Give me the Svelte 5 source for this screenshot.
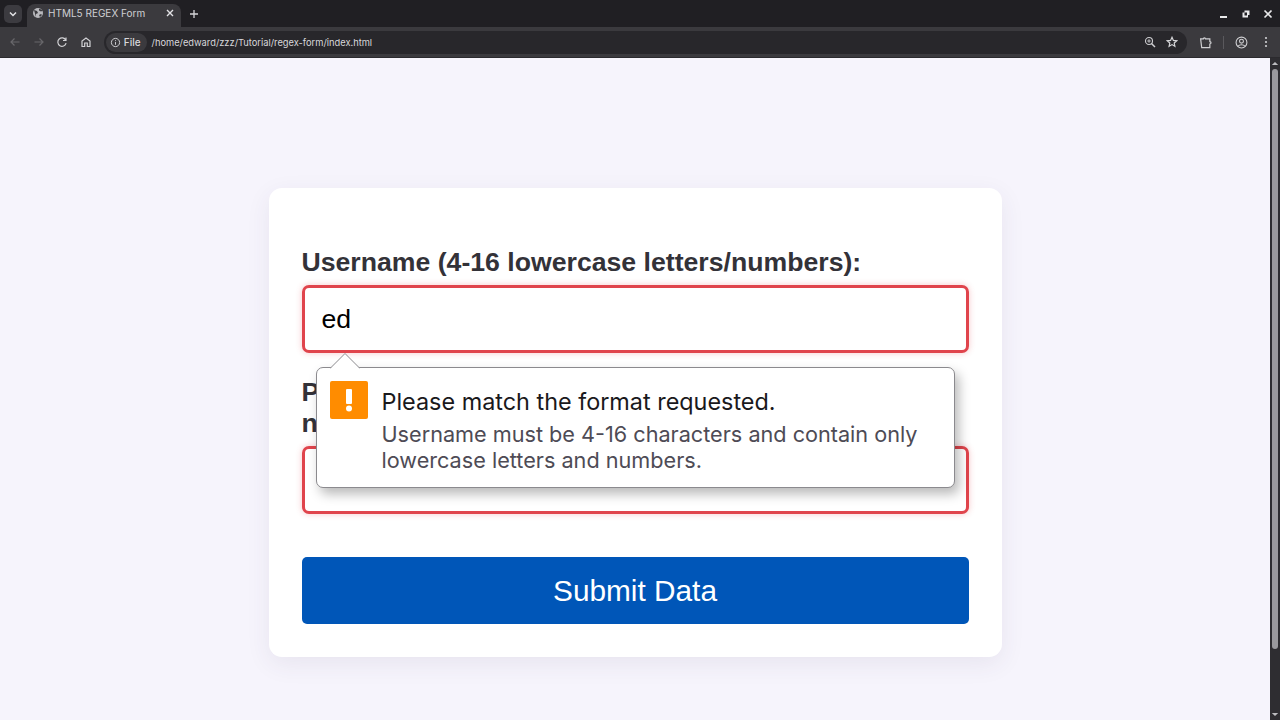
<script>
  let username = $state('ed');
  let password = $state('');
</script>

<div class="window">
  <div class="tabstrip">
    <button class="tabsearch" aria-label="Search tabs">
      <svg viewBox="0 0 10 10" width="10" height="10"><path d="M2 3.5l3 3 3-3" fill="none" stroke="#e3e3e6" stroke-width="1.5" /></svg>
    </button>
    <div class="tab">
      <svg class="favicon" viewBox="0 0 12 12" width="12" height="12">
        <circle cx="6" cy="6" r="5" fill="#b9b9bd" />
        <path d="M2 3l3 1 1 2-2 1 0 3M7 1.5l0 2 2 1 2-1M7 8l2-1 1 1-2 2z" fill="#3b3a3e" />
      </svg>
      <span class="tabtitle">HTML5 REGEX Form</span>
      <svg class="tabclose" viewBox="0 0 10 10" width="10" height="10"><path d="M2 2l6 6M8 2l-6 6" stroke="#e3e3e6" stroke-width="1.4" /></svg>
    </div>
    <svg class="newtab" viewBox="0 0 10 10" width="10" height="10"><path d="M5 1v8M1 5h8" stroke="#d5d5d8" stroke-width="1.3" /></svg>
    <div class="winctl">
      <svg viewBox="0 0 10 10" width="10" height="10"><path d="M1 8h7" stroke="#e8e8ea" stroke-width="2" /></svg>
      <svg viewBox="0 0 10 10" width="10" height="10"><path d="M3.5 1.5h5v4.500h-1.500v2.500h-5.500v-5h2z" fill="#e8e8ea" /><path d="M3.500 3.500h2.500v3h-2.500z" fill="#201f23" /></svg>
      <svg viewBox="0 0 10 10" width="10" height="10"><path d="M1.500 1.500l7 7M8.500 1.500l-7 7" stroke="#e8e8ea" stroke-width="1.700" /></svg>
    </div>
  </div>

  <div class="toolbar">
    <svg class="navicon" viewBox="0 0 12 12" width="12" height="12"><path d="M10.500 6h-8.500M5.500 2.500l-3.500 3.500 3.500 3.500" fill="none" stroke="#68676b" stroke-width="1.200" /></svg>
    <svg class="navicon" viewBox="0 0 12 12" width="12" height="12"><path d="M1.500 6h8.500M6.500 2.500l3.500 3.500-3.500 3.500" fill="none" stroke="#68676b" stroke-width="1.200" /></svg>
    <svg class="navicon" viewBox="0 0 12 12" width="12" height="12"><path d="M9.800 4.200a4.200 4.200 0 1 0 .3 3M10 1.500v3h-3" fill="none" stroke="#d2d2d5" stroke-width="1.200" /></svg>
    <svg class="navicon" viewBox="0 0 12 12" width="12" height="12"><path d="M2 10.500v-5.500l4-3 4 3v5.500h-2.700v-3.500h-2.600v3.500z" fill="none" stroke="#d2d2d5" stroke-width="1.200" /></svg>
    <div class="omnibox">
      <div class="chip">
        <svg viewBox="0 0 12 12" width="11" height="11"><circle cx="6" cy="6" r="4.500" fill="none" stroke="#d8d8db" stroke-width="1" /><path d="M6 5.500v3M6 3.500v1" stroke="#d8d8db" stroke-width="1" /></svg>
        <span>File</span>
      </div>
      <span class="url">/home/edward/zzz/Tutorial/regex-form/index.html</span>
      <svg class="zoomicon" viewBox="0 0 12 12" width="12" height="12"><circle cx="5" cy="5" r="3.500" fill="none" stroke="#cfcfd2" stroke-width="1.100" /><path d="M7.500 7.500l3.500 3.500" stroke="#cfcfd2" stroke-width="1.500" /><path d="M3.200 5h3.600M5 3.200v3.600" stroke="#cfcfd2" stroke-width=".9" /></svg>
      <svg class="star" viewBox="0 0 12 12" width="12" height="12"><path d="M6 1.300l1.400 3.100 3.300.4-2.500 2.200.7 3.300-2.900-1.700-2.900 1.700.7-3.300-2.500-2.200 3.300-.4z" fill="none" stroke="#d5d5d8" stroke-width="1.200" /></svg>
    </div>
    <svg class="ext" viewBox="0 0 12 12" width="13" height="13"><path d="M1.500 2.500h2.500a1 1 0 0 1 2 0h4v2.500a1 1 0 0 1 0 2.200v3.300h-7.500z" transform="translate(0 .2)" fill="none" stroke="#d0d0d3" stroke-width="1.100" /></svg>
    <span class="sep"></span>
    <svg class="avatar" viewBox="0 0 12 12" width="13" height="13"><circle cx="6" cy="6" r="5" fill="none" stroke="#d0d0d3" stroke-width="1" /><circle cx="6" cy="4.800" r="1.800" fill="none" stroke="#d0d0d3" stroke-width="1" /><path d="M2.800 9.300c1.500-1.700 4.900-1.700 6.400 0" fill="none" stroke="#d0d0d3" stroke-width="1" /></svg>
    <svg class="dots" viewBox="0 0 12 12" width="12" height="12"><circle cx="6" cy="2" r="1.100" fill="#d0d0d3" /><circle cx="6" cy="6" r="1.100" fill="#d0d0d3" /><circle cx="6" cy="10" r="1.100" fill="#d0d0d3" /></svg>
  </div>

  <div class="viewport">
    <main class="page">
      <form class="card" onsubmit={(e) => e.preventDefault()}>
        <div class="field">
          <label for="username">Username (4-16 lowercase letters/numbers):</label>
          <div class="inputwrap">
            <input id="username" type="text" bind:value={username} />
            <div class="bubble" role="alert">
              <svg class="arrow" viewBox="0 0 30 16" width="30" height="16"><path d="M0 15.500L15 .5 30 15.500" fill="#fff" stroke="#8b8a8e" stroke-width="1" /></svg>
              <div class="warn">
                <svg viewBox="0 0 38 38" width="38" height="38"><rect width="38" height="38" rx="2" fill="#ff8c00" /><rect x="16" y="8" width="6" height="15" rx="1" fill="#fff" /><circle cx="19" cy="27.500" r="3" fill="#fff" /></svg>
              </div>
              <div class="msg">
                <div class="msgtitle">Please match the format requested.</div>
                <div class="msgbody">Username must be 4-16 characters and contain only lowercase letters and numbers.</div>
              </div>
            </div>
          </div>
        </div>
        <div class="field pw">
          <label for="password">Password (8 chars, 1 uppercase, 1 lowercase, 1 number):</label>
          <input id="password" type="password" bind:value={password} />
        </div>
        <button class="submit" type="submit">Submit Data</button>
      </form>
    </main>
    <div class="scrollbar">
      <svg viewBox="0 0 10 6" width="8" height="5"><path d="M1 5l4-4 4 4z" fill="#bdbdc0" /></svg>
      <span class="thumb"></span>
      <svg class="down" viewBox="0 0 10 6" width="8" height="5"><path d="M1 1l4 4 4-4z" fill="#bdbdc0" /></svg>
    </div>
  </div>
</div>

<style>
  :global(body) {
    margin: 0;
    overflow: hidden;
  }

  .window {
    width: 1280px;
    height: 720px;
    display: flex;
    flex-direction: column;
    font-family: "Liberation Sans", Arial, sans-serif;
  }

  /* browser chrome */
  .tabstrip {
    height: 27px;
    background: #201f23;
    display: flex;
    align-items: center;
    flex-shrink: 0;
  }

  .tabsearch {
    width: 18px;
    height: 18px;
    margin-left: 4px;
    padding: 0;
    border: none;
    border-radius: 5px;
    background: #3c3b40;
    display: flex;
    align-items: center;
    justify-content: center;
  }

  .tab {
    width: 154px;
    height: 23px;
    margin-top: 4px;
    margin-left: 5px;
    background: #3b3a3e;
    border-radius: 8px 8px 0 0;
    display: flex;
    align-items: center;
    box-sizing: border-box;
    padding: 0 6px 5px 5px;
    color: #d0d0d3;
    font-family: Inter, sans-serif;
    font-size: 10px;
  }

  .tabtitle {
    margin-left: 4px;
    flex: 1;
  }

  .newtab {
    margin-left: 8px;
  }

  .winctl {
    margin-left: auto;
    margin-right: 7px;
    display: flex;
    gap: 12px;
  }

  .toolbar {
    height: 30px;
    background: #3b3a3e;
    border-bottom: 1px solid #2b2a2e;
    display: flex;
    align-items: center;
    flex-shrink: 0;
    padding-left: 9px;
  }

  .navicon {
    margin-right: 11.700px;
  }

  .omnibox {
    width: 1083px;
    height: 23px;
    background: #28272b;
    border-radius: 12px;
    display: flex;
    align-items: center;
    box-sizing: border-box;
    padding-right: 9px;
    color: #d8d8db;
    font-family: Inter, sans-serif;
  }

  .chip {
    height: 19px;
    margin-left: 2px;
    padding: 0 6px 0 4px;
    background: #3b3a3e;
    border-radius: 10px;
    display: flex;
    align-items: center;
    gap: 3px;
    font-size: 10px;
    font-weight: 500;
  }

  .url {
    margin-left: 5px;
    font-size: 9.300px;
  }

  .zoomicon {
    margin-left: auto;
  }

  .star {
    margin-left: 10px;
  }

  .ext {
    margin-left: 12px;
  }

  .sep {
    width: 1px;
    height: 13px;
    margin-left: 11px;
    background: #5a595d;
  }

  .avatar {
    margin-left: 11px;
  }

  .dots {
    margin-left: 12px;
  }

  /* page */
  .viewport {
    flex: 1;
    display: flex;
    min-height: 0;
    background: #f6f4fc;
  }

  .page {
    flex: 1;
    display: flex;
    justify-content: center;
    align-items: flex-start;
    padding-top: 130px;
  }

  .card {
    width: 733px;
    box-sizing: border-box;
    padding: 59px 33px 33px;
    background: #fff;
    border-radius: 13px;
    box-shadow: 0 7px 25px rgba(60, 50, 90, 0.08);
    display: flex;
    flex-direction: column;
  }

  .field {
    margin-bottom: 24px;
  }

  .pw {
    margin-bottom: 43px;
  }

  label {
    display: block;
    margin-bottom: 7px;
    color: #333238;
    font-size: 26.650px;
    font-weight: 700;
    line-height: 31px;
  }

  .inputwrap {
    position: relative;
  }

  input {
    display: block;
    width: 100%;
    height: 68px;
    box-sizing: border-box;
    padding: 0 17px;
    border: 3px solid #e0444c;
    border-radius: 7px;
    outline: none;
    box-shadow: 0 0 6px rgba(224, 68, 76, 0.3);
    background: #fff;
    color: #000;
    font-family: "Liberation Sans", Arial, sans-serif;
    font-size: 26.650px;
  }

  .submit {
    height: 67px;
    border: none;
    border-radius: 5px;
    background: #0056b8;
    color: #fff;
    font-family: "Liberation Sans", Arial, sans-serif;
    font-size: 29.800px;
  }

  /* validation bubble */
  .bubble {
    position: absolute;
    left: 14px;
    top: 82px;
    width: 639px;
    height: 121px;
    box-sizing: border-box;
    padding: 13px 13px;
    background: #fff;
    border: 1px solid #8b8a8e;
    border-radius: 7px;
    box-shadow: 4px 6px 12px rgba(0, 0, 0, 0.28);
    display: flex;
    gap: 14px;
    font-family: Inter, sans-serif;
  }

  .arrow {
    position: absolute;
    left: 13px;
    top: -15px;
  }

  .warn {
    width: 38px;
    height: 38px;
    flex-shrink: 0;
  }

  .msg {
    padding-top: 7px;
  }

  .msgtitle {
    color: #1a191c;
    font-size: 23.400px;
    line-height: 28px;
  }

  .msgbody {
    margin-top: 5px;
    color: #4e4b55;
    font-size: 21.650px;
    line-height: 26px;
  }

  .scrollbar {
    width: 10px;
    background: #2e2d31;
    display: flex;
    flex-direction: column;
    align-items: center;
    padding-top: 3px;
    box-sizing: border-box;
    gap: 3px;
  }

  .thumb {
    width: 6px;
    height: 580px;
    border-radius: 3px;
    background: #9a999d;
  }

  .down {
    margin-top: 60px;
  }
</style>
